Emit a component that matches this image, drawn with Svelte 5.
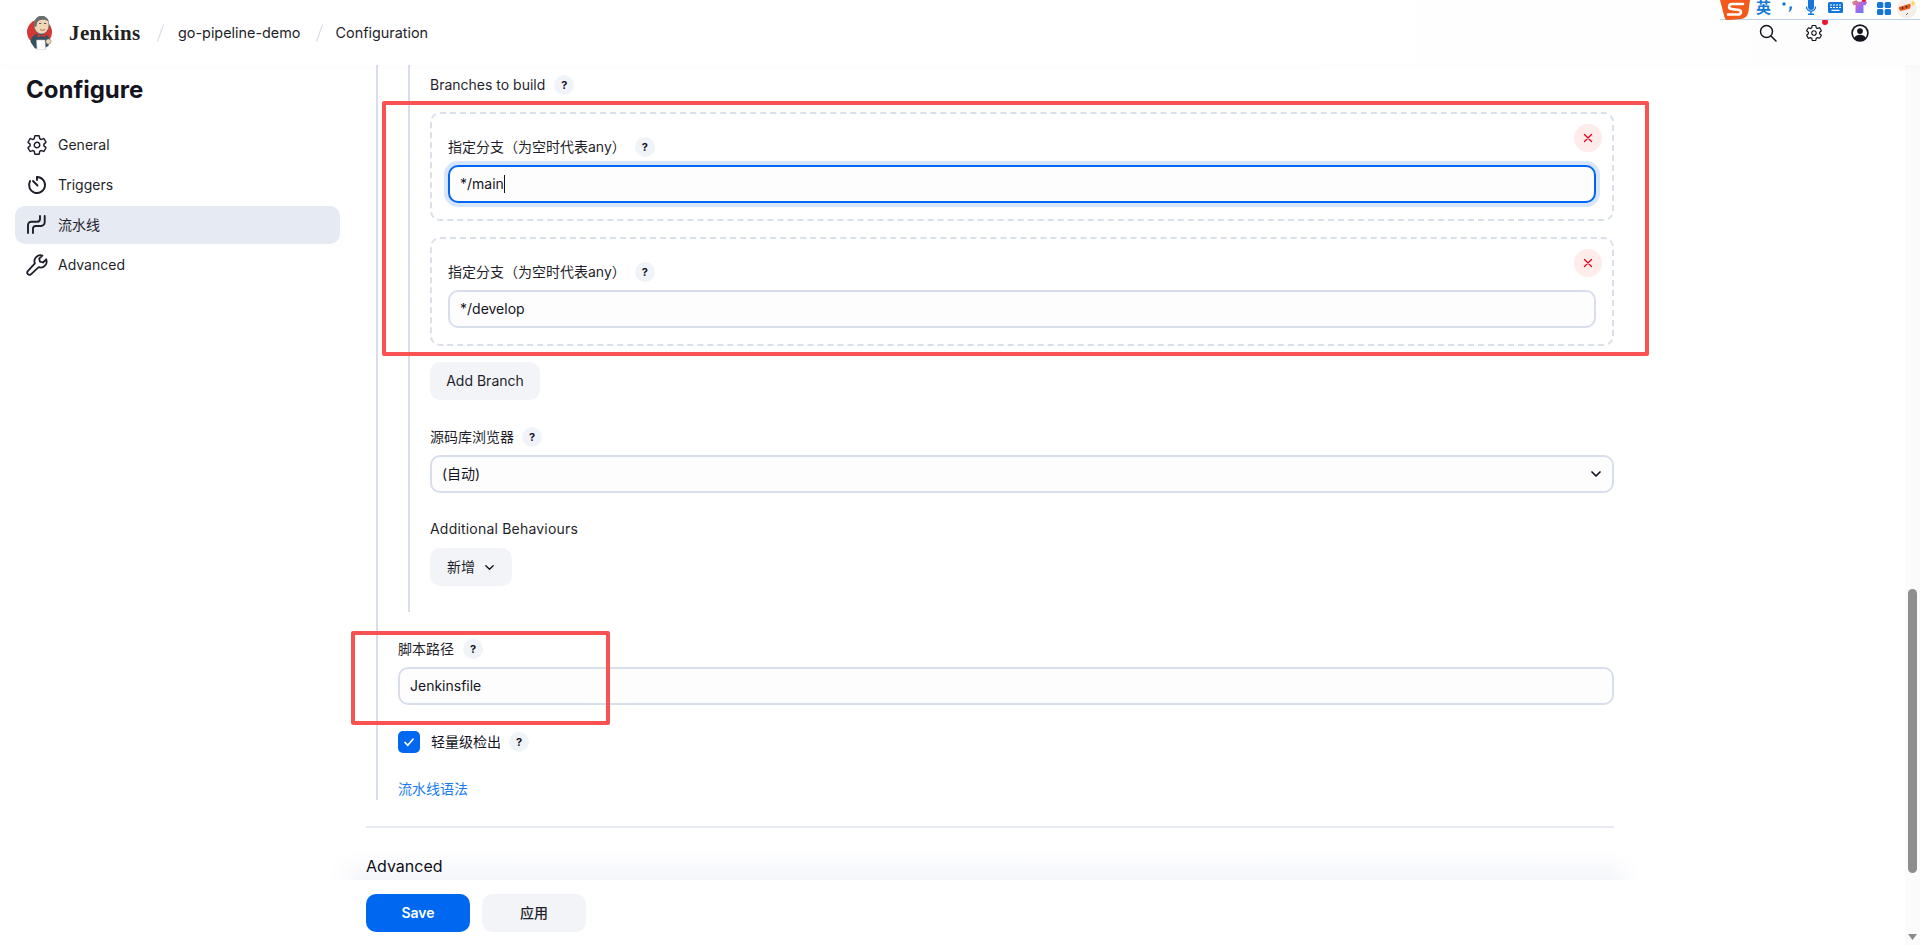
<script>
  const nav = [
    { id: 'general', label: 'General' },
    { id: 'triggers', label: 'Triggers' },
    { id: 'pipeline', label: '流水线', active: true },
    { id: 'advanced', label: 'Advanced' }
  ];
</script>

{#snippet help()}
  <span class="help">?</span>
{/snippet}

{#snippet cog(size)}
  <svg width={size} height={size} viewBox="0 0 512 512" fill="none" stroke="currentColor" stroke-width="34" stroke-linecap="round" stroke-linejoin="round">
    <path d="M262.29 192.31a64 64 0 1057.4 57.4 64.13 64.13 0 00-57.4-57.4zM416.39 256a154.34 154.34 0 01-1.53 20.79l45.21 35.46a10.81 10.81 0 012.45 13.75l-42.77 74a10.81 10.81 0 01-13.14 4.59l-44.9-18.08a16.11 16.11 0 00-15.17 1.75A164.48 164.48 0 01325 400.8a15.94 15.94 0 00-8.82 12.14l-6.73 47.89a11.08 11.08 0 01-10.68 9.17h-85.54a11.11 11.11 0 01-10.69-8.87l-6.72-47.82a16.07 16.07 0 00-9-12.22 155.3 155.3 0 01-21.46-12.57 16 16 0 00-15.11-1.71l-44.89 18.07a10.81 10.81 0 01-13.14-4.58l-42.77-74a10.8 10.8 0 012.45-13.75l38.21-30a16.05 16.05 0 006-14.08c-.36-4.17-.58-8.33-.58-12.5s.21-8.27.58-12.35a16 16 0 00-6.07-13.94l-38.19-30A10.81 10.81 0 0149.48 186l42.77-74a10.81 10.81 0 0113.14-4.59l44.9 18.08a16.11 16.11 0 0015.17-1.75A164.48 164.48 0 01187 111.2a15.94 15.94 0 008.82-12.14l6.73-47.89A11.08 11.08 0 01213.23 42h85.54a11.11 11.11 0 0110.69 8.87l6.72 47.82a16.07 16.07 0 009 12.22 155.3 155.3 0 0121.46 12.57 16 16 0 0015.11 1.71l44.89-18.07a10.81 10.81 0 0113.14 4.58l42.77 74a10.8 10.8 0 01-2.45 13.75l-38.21 30a16.05 16.05 0 00-6.05 14.08c.33 4.14.55 8.3.55 12.47z"/>
  </svg>
{/snippet}

{#snippet navIcon(id)}
  {#if id === 'general'}
    {@render cog(22)}
  {:else if id === 'triggers'}
    <svg width="22" height="22" viewBox="0 0 22 22" fill="none" stroke="currentColor" stroke-width="1.9" stroke-linecap="round" stroke-linejoin="round">
      <path d="M11 3a8 8 0 1 1-6.900 4"/>
      <path d="M11 3v3"/>
      <path d="M7 7l4.500 4.500"/>
    </svg>
  {:else if id === 'pipeline'}
    <svg width="22" height="22" viewBox="0 0 22 22" fill="none" stroke="currentColor" stroke-width="1.9" stroke-linecap="round" stroke-linejoin="round">
      <path d="M2 19v-8a3.300 3.300 0 0 1 3.300-3.300h6a2.700 2.700 0 0 0 2.700-2.700V2"/>
      <path d="M7 19v-4.500A2.500 2.500 0 0 1 9.500 12h5.500a3.700 3.700 0 0 0 3.700-3.700V2"/>
    </svg>
  {:else}
    <svg width="22" height="22" viewBox="0 0 22 22" fill="none" stroke="currentColor" stroke-width="1.800" stroke-linecap="round" stroke-linejoin="round">
      <path d="M20.200 5.300l-3.200 3.200-3-.800-.800-3 3.200-3.200a6 6 0 0 0-7.500 7.900L1.800 17.200a2.200 2.200 0 0 0 3.100 3.100l7.800-7.100a6 6 0 0 0 7.500-7.900z"/>
    </svg>
  {/if}
{/snippet}

<div class="page">
  <header class="topbar">
    <div class="brand">
      <svg class="logo" width="26" height="34" viewBox="0 0 26 34">
        <ellipse cx="12.500" cy="16" rx="12.500" ry="12.500" fill="#d33833"/>
        <path d="M3.500 26c.5-5 3.500-8 9-8.500 5.500-.5 9 2 10 6l-1 6.500-5 2.500H8z" fill="#335061"/>
        <ellipse cx="14.500" cy="9" rx="7.500" ry="9" fill="#f0d6b7" stroke="#49728b" stroke-width=".6"/>
        <path d="M7 10c-.4-5 2.600-10 7.500-10 3.500 0 6.500 2 7.300 5.500C19 3.500 15 3 12 4.500c-2 1-2.500 3.500-2.500 6.500z" fill="#6d6b6d"/>
        <path d="M12 7.500h2.200M17 7.500h2.200" stroke="#49494f" stroke-width=".9"/>
        <path d="M13 13.500c1.500 1 3.500 1 5 0" stroke="#a8513a" stroke-width=".8" fill="none"/>
        <path d="M10.500 17.500l4 1.800 4-1.800v4l-4-1.500-4 1.500z" fill="#d33833"/>
        <path d="M9.500 24h8.500l.5 9c0 .7-.5 1-1 1H11c-.6 0-1-.4-1-1z" fill="#fff" stroke="#b8b8b8" stroke-width=".6"/>
        <circle cx="21.500" cy="25.500" r="2.600" fill="#f0d6b7" stroke="#777" stroke-width=".6"/>
      </svg>
      <span class="wordmark">Jenkins</span>
    </div>
    <span class="slash"></span>
    <span class="crumb">go-pipeline-demo</span>
    <span class="slash"></span>
    <span class="crumb">Configuration</span>
    <div class="actions">
      <svg width="18" height="18" viewBox="0 0 18 18" fill="none" stroke="#14141f" stroke-width="1.500" stroke-linecap="round">
        <circle cx="7.500" cy="7.500" r="6"/>
        <path d="M12 12l5 5"/>
      </svg>
      <span class="cogwrap">
        {@render cog(18)}
        <span class="dot"></span>
      </span>
      <svg width="18" height="18" viewBox="0 0 20 20">
        <circle cx="10" cy="10" r="8.800" fill="none" stroke="#14141f" stroke-width="1.800"/>
        <circle cx="10" cy="7.800" r="3.200" fill="#14141f"/>
        <path d="M3.500 15.800c1.300-2.700 3.800-3.800 6.500-3.800s5.200 1.100 6.500 3.800c-1.600 2-4 3.200-6.500 3.200s-4.900-1.200-6.500-3.200z" fill="#14141f"/>
      </svg>
    </div>
  </header>

  <div class="body">
    <aside class="sidebar">
      <h1>Configure</h1>
      <nav>
        {#each nav as item}
          <div class="nav-item" class:active={item.active}>
            {@render navIcon(item.id)}
            <span>{item.label}</span>
          </div>
        {/each}
      </nav>
    </aside>

    <main class="main">
      <div class="outer">
        <div class="inner">
          <div class="label first">Branches to build {@render help()}</div>

          {#each ['*/main', '*/develop'] as branch, i}
            <div class="repeat">
              <button class="remove" aria-label="remove">
                <svg width="10" height="10" viewBox="0 0 10 10" stroke="#e6001f" stroke-width="1.300" stroke-linecap="round"><path d="M1.500 1.500l7 7M8.500 1.500l-7 7"/></svg>
              </button>
              <div class="label">指定分支（为空时代表any） {@render help()}</div>
              <div class="input" class:focus={i === 0}>{branch}{#if i === 0}<span class="caret"></span>{/if}</div>
            </div>
          {/each}

          <div class="btn add">Add Branch</div>

          <div class="label browser">源码库浏览器 {@render help()}</div>
          <div class="input select">
            <span>(自动)</span>
            <svg width="12" height="12" viewBox="0 0 12 12" fill="none" stroke="#14141f" stroke-width="1.700" stroke-linecap="round" stroke-linejoin="round"><path d="M2 4l4 4 4-4"/></svg>
          </div>

          <div class="label behaviours">Additional Behaviours</div>
          <div class="btn addnew">
            新增
            <svg width="11" height="11" viewBox="0 0 12 12" fill="none" stroke="#14141f" stroke-width="1.500" stroke-linecap="round" stroke-linejoin="round"><path d="M2 4l4 4 4-4"/></svg>
          </div>
        </div>

        <div class="script">
          <div class="label">脚本路径 {@render help()}</div>
          <div class="input">Jenkinsfile</div>
          <div class="check">
            <span class="box">
              <svg width="12" height="12" viewBox="0 0 12 12" fill="none" stroke="#fff" stroke-width="1.700" stroke-linecap="round" stroke-linejoin="round"><path d="M2 6.500l2.800 2.800L10 3.200"/></svg>
            </span>
            <span>轻量级检出</span>
            {@render help()}
          </div>
          <div class="link">流水线语法</div>
        </div>
      </div>

      <hr />
      <div class="section">Advanced</div>
    </main>

    <div class="scrollbar">
      <div class="thumb"></div>
      <svg class="arrow" width="9" height="6" viewBox="0 0 9 6"><path d="M0 0h9L4.500 6z" fill="#8a8a8a"/></svg>
    </div>
  </div>

  <div class="savebar">
    <div class="btn save">Save</div>
    <div class="btn apply">应用</div>
  </div>

  <div class="redbox r1"></div>
  <div class="redbox r2"></div>

  <div class="ime">
    <svg class="ime-s" width="30" height="20" viewBox="0 0 30 20">
      <path d="M0 0h30l-1.500 11c-.7 5-3 7.500-8 8l-12 1c-2 .2-3-.5-3.800-2z" fill="#f2591a"/>
      <path d="M23 4h-11c-3.500 0-4 4.500-.5 5l7.500 1c3 .5 2.500 4.500-1 4.500H8" fill="none" stroke="#fff" stroke-width="2.600" stroke-linecap="round"/>
    </svg>
    <span class="ime-en">英</span>
    <svg class="ime-punc" width="11" height="12" viewBox="0 0 11 12" fill="#1476d8"><circle cx="2" cy="3" r="1.700"/><path d="M7.500 5.500h2.700l-.5 2.300c-.2 1.300-.9 2.400-2.300 3.200l-.8-.7c.7-.5 1-1.100 1.100-1.800H7.500z"/></svg>
    <svg class="mic" width="12" height="15" viewBox="0 0 12 15" fill="#1476d8"><rect x="3" y="-2" width="6" height="12" rx="3"/><path d="M.800 6.500h1.300c0 2.400 1.700 4 3.900 4s3.900-1.600 3.900-4h1.300c0 2.900-2 4.900-4.500 5.200V13.500h2.300V15H3v-1.500h2.300v-1.800C2.800 11.400.800 9.400.800 6.500z"/></svg>
    <svg class="kb" width="15" height="11" viewBox="0 0 15 11"><rect width="15" height="11" rx="1.500" fill="#1476d8"/><path d="M2 3h2M5 3h2M8 3h2M11 3h2M2 5.500h2M5 5.500h2M8 5.500h2M11 5.500h2M3.500 8.300h8" stroke="#fff" stroke-width="1.200"/></svg>
    <span class="shirt">
      <svg width="15" height="13" viewBox="0 0 15 13"><defs><linearGradient id="sh" x1="0" y1="0" x2="1" y2="1"><stop offset="0" stop-color="#f08a5a"/><stop offset=".5" stop-color="#b066e8"/><stop offset="1" stop-color="#3f8cf0"/></linearGradient></defs><path d="M4.500 0L0 2l1.500 3.500 2-.8V13h8V4.700l2 .8L15 2 10.500 0c-.5 1.200-1.700 1.800-3 1.800S5 1.200 4.500 0z" fill="url(#sh)"/></svg>
      <i></i>
    </span>
    <svg class="grid" width="14" height="13" viewBox="0 0 14 13" fill="#1476d8"><rect width="6.300" height="6" rx="1.500"/><rect x="7.700" width="6.300" height="6" rx="1.500"/><rect y="7" width="6.300" height="6" rx="1.500"/><rect x="7.700" y="7" width="6.300" height="6" rx="1.500"/></svg>
    <svg class="ime-last" width="20" height="19" viewBox="0 0 20 19"><circle cx="10" cy="8.500" r="10" fill="#f6eeea"/><path d="M2 7l10-3c1-.2 2 .5 1.800 1.500L13 8.500l-9 2.500c-1.500-.2-2.500-2.300-2-4z" fill="#e85a1c"/><circle cx="5.500" cy="8" r="1" fill="#333"/><circle cx="9.500" cy="6.800" r="1" fill="#333"/><path d="M9 15l2-2" stroke="#666" stroke-width="1"/><path d="M16 0l1 2.500 2 .8-2 .8-1 2.400-1-2.400-2-.8 2-.8z" fill="#f8d84a"/></svg>
  </div>
</div>

<style>
  :global(body) {
    margin: 0;
    background: #fff;
  }
  .page {
    position: relative;
    height: 945px;
    overflow: hidden;
    font-family: Inter, "Noto Sans CJK SC", sans-serif;
    font-size: 14px;
    line-height: 20px;
    color: #14141f;
    background: #fff;
  }

  /* top bar */
  .topbar {
    height: 65px;
    display: flex;
    align-items: center;
    padding: 0 0 0 27px;
    box-sizing: border-box;
    background: linear-gradient(90deg, #fff 0, #fff 65%, #fdfdfd 100%);
    box-shadow: 0 2px 6px rgba(20, 20, 31, 0.02);
    position: relative;
    z-index: 2;
  }
  .brand {
    display: flex;
    align-items: center;
    gap: 16px;
    width: 114px;
  }
  .logo {
    flex: none;
    margin-top: 1px;
  }
  .wordmark {
    font-family: "Liberation Serif", "DejaVu Serif", serif;
    font-weight: 700;
    font-size: 21px;
    letter-spacing: 0.4px;
    color: #222;
    margin-top: 1px;
  }
  .slash {
    width: 1px;
    height: 18px;
    margin: 0 17px 0 19px;
    background: #d5dae6;
    transform: rotate(20deg);
  }
  .crumb ~ .slash {
    margin: 0 16px 0 18px;
  }
  .crumb {
    font-size: 14.4px;
    color: #1f1f2b;
  }
  .actions {
    margin-left: auto;
    margin-right: 51px;
    display: flex;
    align-items: center;
    gap: 28px;
    padding-top: 1px;
  }
  .cogwrap {
    position: relative;
    display: flex;
    width: 18px;
    height: 18px;
  }
  .dot {
    position: absolute;
    right: -5px;
    top: -5px;
    width: 6px;
    height: 6px;
    border-radius: 50%;
    background: #f0142f;
  }

  /* body */
  .body {
    height: 880px;
    display: flex;
  }
  .sidebar {
    width: 366px;
    flex: none;
    padding: 7px 0 0 15px;
    box-sizing: border-box;
  }
  h1 {
    margin: 0 0 18px 11px;
    font-size: 24px;
    line-height: 36px;
    font-weight: 700;
    color: #14141f;
  }
  nav {
    display: flex;
    flex-direction: column;
    gap: 2px;
    width: 325px;
  }
  .nav-item {
    height: 38px;
    display: flex;
    align-items: center;
    gap: 10px;
    padding-left: 11px;
    border-radius: 10px;
    color: #1f1f2b;
    font-size: 14px;
  }
  .nav-item.active {
    background: #e6eaf3;
  }

  .main {
    width: 1248px;
    flex: none;
  }
  .outer {
    margin-left: 10px;
    border-left: 2px solid #d9deec;
    height: 735px;
  }
  .inner {
    margin-left: 30px;
    padding: 10px 0 0 20px;
    border-left: 2px solid #d9deec;
    height: 547px;
    box-sizing: border-box;
  }

  .label {
    display: flex;
    align-items: center;
    gap: 9px;
    height: 20px;
    font-size: 14px;
    color: #1f1f2b;
  }
  .first {
    margin-bottom: 17px;
  }
  .help {
    display: inline-flex;
    align-items: center;
    justify-content: center;
    width: 20px;
    height: 20px;
    border-radius: 50%;
    background: #f0f3f7;
    font-size: 11px;
    font-weight: 700;
    color: #14141f;
    flex: none;
  }

  .repeat {
    position: relative;
    height: 109px;
    box-sizing: border-box;
    border: 2px dashed #d9e0ea;
    border-radius: 10px;
    padding: 23px 16px 0;
    margin-bottom: 16px;
  }
  .repeat .label {
    height: 20px;
    margin-bottom: 8px;
  }
  .remove {
    position: absolute;
    right: 10px;
    top: 10px;
    width: 28px;
    height: 28px;
    border: 0;
    padding: 0;
    border-radius: 50%;
    background: #fdecea;
    display: flex;
    align-items: center;
    justify-content: center;
  }

  .input {
    height: 38px;
    box-sizing: border-box;
    border: 2px solid #d9deec;
    border-radius: 10px;
    background: #fdfdfe;
    padding: 0 10px;
    display: flex;
    align-items: center;
    color: #14141f;
  }
  .input.focus {
    border-color: #0068f0;
    box-shadow: 0 0 0 4px #d7e6fd;
  }
  .caret {
    width: 1px;
    height: 18px;
    background: #14141f;
  }

  .btn {
    height: 38px;
    box-sizing: border-box;
    display: inline-flex;
    align-items: center;
    justify-content: center;
    border-radius: 10px;
    background: #f2f4f8;
    color: #1f1f2b;
  }
  .add {
    width: 110px;
    display: flex;
  }
  .browser {
    margin-top: 27px;
    margin-bottom: 8px;
    gap: 8px;
  }
  .select {
    justify-content: space-between;
    padding-right: 10px;
  }
  .behaviours {
    margin-top: 26px;
    margin-bottom: 9px;
    display: block;
    letter-spacing: 0.2px;
  }
  .addnew {
    width: 82px;
    gap: 9px;
    display: flex;
  }

  .script {
    padding: 27px 0 0 20px;
  }
  .script .label {
    margin-bottom: 8px;
  }
  .check {
    margin-top: 26px;
    display: flex;
    align-items: center;
    height: 22px;
    gap: 8px;
  }
  .box {
    width: 22px;
    height: 22px;
    border-radius: 5px;
    background: #0068f0;
    display: flex;
    align-items: center;
    justify-content: center;
    margin-right: 3px;
  }
  .link {
    margin-top: 26px;
    color: #1a7cf0;
  }

  hr {
    margin: 26px 0 0;
    height: 2px;
    border: 0;
    background: #e8ebf3;
  }
  .section {
    position: relative;
    z-index: 4;
    margin-top: 26px;
    font-size: 16px;
    line-height: 24px;
    color: #0e0e18;
  }

  .scrollbar {
    margin-left: auto;
    width: 15px;
    flex: none;
    height: 880px;
    background: #fbfbfb;
    display: flex;
    flex-direction: column;
    align-items: center;
    position: relative;
  }
  .thumb {
    position: absolute;
    top: 524px;
    width: 9px;
    height: 284px;
    border-radius: 5px;
    background: #8e8e8e;
  }
  .arrow {
    position: absolute;
    bottom: 5px;
  }

  .savebar {
    position: absolute;
    left: 0;
    right: 15px;
    bottom: 0;
    height: 65px;
    padding: 14px 0 0 366px;
    box-sizing: border-box;
    display: flex;
    gap: 12px;
    background: #fff;
    z-index: 3;
  }
  .savebar::before {
    content: "";
    position: absolute;
    left: 330px;
    width: 1310px;
    top: -30px;
    height: 30px;
    background: linear-gradient(180deg, rgba(240, 242, 248, 0) 0, rgba(240, 242, 248, 0.75) 100%);
    mask-image: linear-gradient(90deg, transparent, #000 36px, #000 calc(100% - 36px), transparent);
    pointer-events: none;
  }
  .save,
  .apply {
    width: 104px;
    font-weight: 500;
  }
  .save {
    background: #0068f0;
    color: #fff;
    font-weight: 600;
  }

  .redbox {
    position: absolute;
    box-sizing: border-box;
    border: 4px solid #fa5252;
    border-radius: 2px;
    z-index: 4;
    pointer-events: none;
  }
  .r1 {
    left: 382px;
    top: 101px;
    width: 1267px;
    height: 255px;
  }
  .r2 {
    left: 351px;
    top: 631px;
    width: 259px;
    height: 94px;
  }

  .ime {
    position: absolute;
    left: 1720px;
    right: 0;
    top: 0;
    height: 19px;
    background: #fff;
    border-bottom: 1px solid #bcd2ec;
    display: flex;
    align-items: flex-start;
    z-index: 5;
  }
  .ime-s {
    position: absolute;
    left: 0;
    top: 0;
  }
  .ime-en {
    margin-left: 36px;
    font-size: 15px;
    line-height: 15px;
    font-weight: 700;
    color: #1476d8;
    width: 15px;
  }
  .ime-punc {
    margin: 1px 0 0 11px;
  }
  .mic {
    margin-left: 12px;
  }
  .kb {
    margin: 2px 0 0 11px;
  }
  .shirt {
    position: relative;
    display: flex;
    margin-left: 9px;
  }
  .shirt i {
    position: absolute;
    right: 1px;
    top: -2px;
    width: 4px;
    height: 4px;
    border-radius: 50%;
    background: #f0142f;
  }
  .grid {
    margin: 2px 0 0 10px;
  }
  .ime-last {
    margin-left: 6px;
  }
</style>
